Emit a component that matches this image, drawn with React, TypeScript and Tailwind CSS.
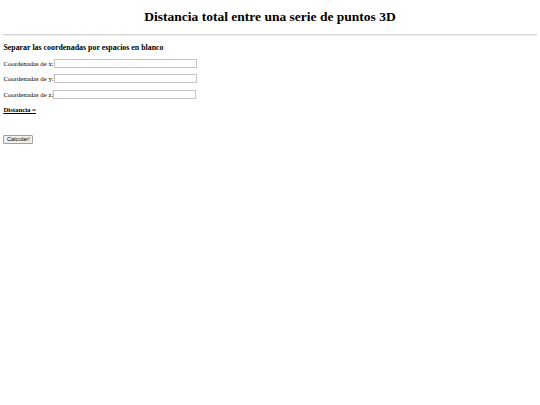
import React from "react";

export default function App() {
  const rows = ["x", "y", "z"];
  return (
    <div className="min-h-[405px] w-[540px] bg-white px-[3.4px] pt-[0.1px] text-black text-[6.75px] leading-[normal] [font-family:'Liberation_Serif',serif]">
      <h1 className="mt-[9px] mb-[9px] text-center text-[13.5px] font-bold leading-[normal]">
        Distancia total entre una serie de puntos 3D
      </h1>
      <hr className="h-0 border-0 border-t-[0.85px] border-b-[0.85px] border-t-[#d4d4d4] border-b-[#eeeeee]" />
      <h3 className="mt-[7px] mb-[6.5px] text-[7.9px] font-bold leading-[normal]">
        Separar las coordenadas por espacios en blanco
      </h3>
      {rows.map((r) => (
        <p key={r} className="mb-[6.75px] flex items-center">
          <span>Coordenadas de {r}:</span>
          <input
            type="text"
            className="h-[9px] w-[143px] border-[0.85px] border-[#c4c4c4] bg-white px-[1px] text-[5.6px] outline-none"
          />
        </p>
      ))}
      <p className="mb-[22px]">
        <b className="underline">Distancia =</b>
      </p>
      <button className="h-[9px] border-[0.85px] border-[#a0a0a0] bg-[#efefef] px-[2.5px] text-[5.8px] leading-none rounded-[1px] [font-family:'Liberation_Sans',sans-serif]">
        Calcular!
      </button>
    </div>
  );
}
